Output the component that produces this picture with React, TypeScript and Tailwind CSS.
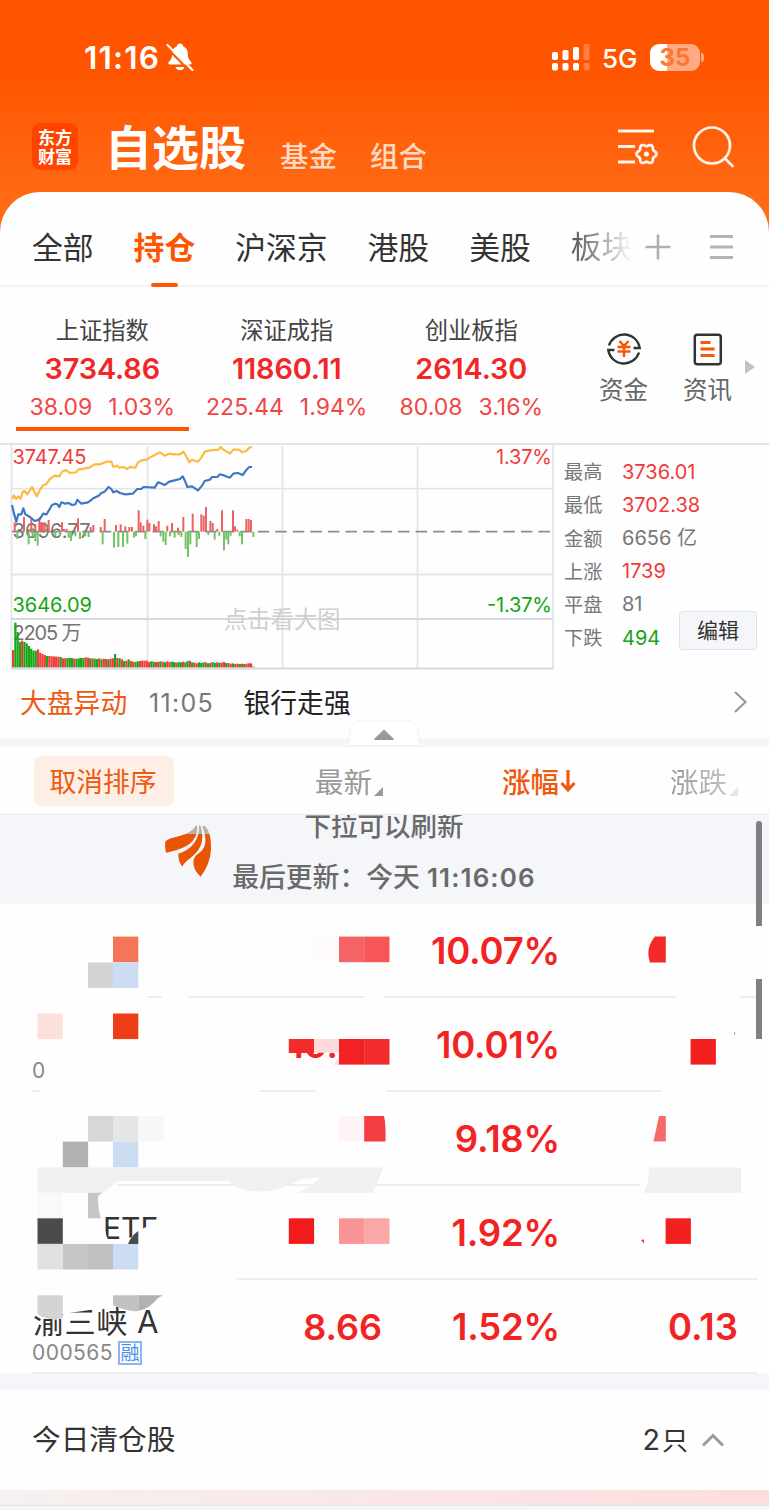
import type { ReactNode } from "react";

const tabs = ["全部", "持仓", "沪深京", "港股", "美股"];

const indices = [
  { name: "上证指数", value: "3734.86", diff: "38.09", pct: "1.03%" },
  { name: "深证成指", value: "11860.11", diff: "225.44", pct: "1.94%" },
  { name: "创业板指", value: "2614.30", diff: "80.08", pct: "3.16%" },
];

const stats = [
  { label: "最高", value: "3736.01", color: "text-[#f03a3a]" },
  { label: "最低", value: "3702.38", color: "text-[#f03a3a]" },
  { label: "金额", value: "6656 亿", color: "text-[#777777]" },
  { label: "上涨", value: "1739", color: "text-[#f03a3a]" },
  { label: "平盘", value: "81", color: "text-[#777777]" },
  { label: "下跌", value: "494", color: "text-[#14a514]" },
];

const stocks = [
  { name: "", code: "", price: "", pct: "10.07%", change: "" },
  { name: "", code: "0", price: "10.", pct: "10.01%", change: "" },
  { name: "", code: "", price: "", pct: "9.18%", change: "" },
  { name: "ETF", code: "", price: "", pct: "1.92%", change: "" },
  { name: "渝三峡 A", code: "000565", price: "8.66", pct: "1.52%", change: "0.13" },
];

// Chart series, in a space three times the size of the chart
const yellowLine =
  "36,192 42,182 48,192 54,184 62,192 68,170 74,168 82,178 96,156 110,184 120,164 130,150 138,148 150,132 164,122 178,124 186,110 198,105 210,114 228,112 234,104 268,98 284,88 300,88 320,80 334,80 340,96 352,92 358,98 372,96 380,102 390,96 406,98 414,82 424,76 440,74 460,62 480,52 494,62 508,56 520,58 540,58 550,50 560,66 568,82 576,74 594,80 604,68 614,50 630,46 656,44 662,36 670,44 690,56 700,44 718,44 726,52 738,48 748,38 756,36";
const blueLine =
  "36,210 42,236 49,260 55,238 64,238 70,220 76,238 90,246 104,258 118,254 130,236 140,238 156,210 166,206 172,208 178,216 184,202 196,206 206,204 216,210 226,208 232,194 244,206 264,202 280,190 296,182 304,174 314,170 326,156 334,162 340,172 350,168 360,174 376,178 398,176 412,162 424,162 430,156 464,158 474,142 486,146 494,150 508,140 524,136 540,132 548,124 556,140 562,156 576,154 594,166 606,152 614,138 630,134 636,126 652,126 660,118 674,122 690,128 700,116 714,114 728,120 738,106 748,96 756,96";

const upBars = [
  [44, 262], [72, 246], [94, 252], [106, 268], [118, 248], [123, 262], [128, 262], [134, 262], [146, 255],
  [186, 262], [192, 282], [200, 282], [234, 250], [272, 276], [280, 270], [302, 276], [314, 252],
  [348, 270], [362, 268], [376, 274], [388, 276], [396, 276], [416, 226], [422, 262], [430, 272],
  [442, 254], [448, 264], [462, 268], [468, 274], [476, 258], [502, 272], [516, 264], [534, 278],
  [550, 246], [578, 236], [604, 238], [611, 242], [618, 216], [631, 258], [638, 264], [652, 282],
  [666, 226], [699, 226], [705, 274], [712, 284], [739, 252], [746, 252], [753, 255],
];
const downBars = [
  [52, 312], [86, 328], [98, 304], [106, 318], [113, 332], [166, 304], [180, 304], [206, 308],
  [213, 318], [226, 304], [240, 312], [256, 304], [266, 306], [308, 328], [342, 338], [355, 336],
  [369, 336], [382, 326], [402, 308], [408, 304], [436, 312], [482, 304], [490, 320], [497, 330],
  [510, 304], [524, 308], [536, 300], [544, 306], [557, 342], [564, 366], [571, 328], [590, 336],
  [597, 312], [625, 300], [644, 314], [658, 302], [672, 346], [679, 314], [685, 328], [692, 302],
  [719, 304], [726, 328], [760, 306],
];
const volumes = [
  52, 134, 106, 76, 80, 76, 72, 64, 56, 50, 50, 54, 44, 40, 37, 34, 34, 33, 33, 32, 32, 31, 27, 27, 28,
  28, 28, 26, 26, 27, 28, 28, 30, 29, 27, 27, 26, 25, 27, 24, 26, 25, 24, 26, 27, 40, 28, 27, 24, 19,
  20, 24, 19, 17, 16, 18, 19, 20, 20, 20, 16, 18, 17, 16, 16, 18, 17, 15, 18, 16, 17, 16, 14, 16, 15,
  17, 15, 19, 20, 15, 14, 12, 15, 13, 15, 15, 12, 13, 16, 13, 15, 14, 14, 16, 13, 13, 11, 12, 10, 11,
  10, 11, 10, 11, 12, 12, 2,
];
const volumeColors =
  "rgggrggggggrrrrgrrrrrgrrgggrggggrrgrggrgrrgrrgrgrgrgrrggrrrrrggrrgrgrrggrggrggrgrrgggrgrggrgrrgrrgrrgrgrrrg";

const gearPoints = Array.from({ length: 73 }, (_, i) => {
  const a = (i * 5 * Math.PI) / 180;
  const r = 8.9 + 1.1 * Math.cos(6 * a);
  return `${(29.5 + r * Math.cos(a)).toFixed(2)},${(25 + r * Math.sin(a)).toFixed(2)}`;
}).join(" ");

function StatusBar() {
  return (
    <div className="flex h-[114px] items-center justify-between pr-[65px] pl-[84px] text-white">
      <div className="flex items-center gap-[6px]">
        <span className="pt-[1px] text-[31.5px] leading-none font-semibold tracking-[1.2px]">11:16</span>
        <svg width="28" height="28" viewBox="0 0 28 28">
          <path
            d="M14 0.5c1.7 0 2.9 1.1 3.1 2.7 3 1.2 4.7 3.9 4.7 7.5 0 4.2 1.2 6 3.4 8.2.9 1 .5 2.6-1.1 2.6H3.9c-1.6 0-2-1.6-1.1-2.6 2.2-2.2 3.4-4 3.4-8.2 0-3.6 1.7-6.3 4.7-7.5C11.1 1.6 12.3.5 14 .5z"
            fill="white"
          />
          <path d="M9.5 24h9c-.6 2-2.4 3.300-4.500 3.300S10.100 26 9.500 24z" fill="white" />
          <path d="M0.500 4.500L23.500 28" stroke="#ff5900" strokeWidth="2.200" />
          <path d="M1.500 2L26.500 27" stroke="white" strokeWidth="2.200" strokeLinecap="round" />
        </svg>
      </div>
      <div className="flex items-center">
        <svg width="38" height="28" viewBox="0 0 38 28" fill="white">
          <rect x="0" y="9" width="6" height="8" rx="1.800" />
          <rect x="10.500" y="7" width="6" height="10" rx="1.800" />
          <rect x="21" y="4" width="6" height="13" rx="1.800" />
          <rect x="31.500" y="1" width="6" height="16" rx="1.800" opacity="0.25" />
          <rect x="0" y="20" width="6" height="7.500" rx="1.800" />
          <rect x="10.500" y="20" width="6" height="7.500" rx="1.800" />
          <rect x="21" y="20" width="6" height="7.500" rx="1.800" />
          <rect x="31.500" y="20" width="6" height="7.500" rx="1.800" opacity="0.25" />
        </svg>
        <span className="ml-[12px] w-[37px] pt-[3px] text-[26px] leading-none font-medium">5G</span>
        <div className="ml-[11px] flex h-[27px] w-[50px] items-center justify-center rounded-[9px] bg-linear-to-r from-white from-35% to-[#ffaa80] to-35% pt-[2px] text-[24px] leading-none font-bold text-[#ff7630]">
          35
        </div>
        <div className="ml-[1px] h-[9px] w-[3px] rounded-r-full bg-[#ffaa80]" />
      </div>
    </div>
  );
}

function TitleBar() {
  return (
    <div className="flex h-[78px] items-start pl-[32px] text-white">
      <div className="mt-[9px] flex h-[47px] w-[46px] flex-col items-center rounded-[9px] bg-[#ff4400] pt-[4px] font-['Noto_Sans_CJK_SC',sans-serif] text-[17px] leading-[19px] font-bold">
        <span>东方</span>
        <span>财富</span>
      </div>
      <h1 className="mt-[9px] ml-[27px] w-[143px] text-[47px] leading-[50px] font-bold whitespace-nowrap">自选股</h1>
      <span className="mt-[26px] ml-[32px] text-[28.500px] leading-[34px] font-medium text-[#ffd9c4]">基金</span>
      <span className="mt-[26px] ml-[33px] text-[28.500px] leading-[34px] font-medium text-[#ffd9c4]">组合</span>
      <svg className="mt-[15px] ml-[190px]" width="44" height="38" viewBox="0 0 44 38" fill="none" stroke="#fff3ea">
        <path d="M1 2h36M1 17.500h17M1 33h17" strokeWidth="2.800" />
        <polygon points={gearPoints} strokeWidth="2.800" strokeLinejoin="round" />
        <circle cx="29.500" cy="25" r="2.600" fill="#fff3ea" stroke="none" />
      </svg>
      <svg className="mt-[12px] ml-[31px]" width="44" height="44" viewBox="0 0 44 44" fill="none" stroke="#fff3ea" strokeWidth="2.700">
        <circle cx="20" cy="19.500" r="18" />
        <path d="M33 32.500l7.500 7.500" strokeLinecap="round" />
      </svg>
    </div>
  );
}

function TabBar() {
  return (
    <nav className="flex h-[95px] items-stretch border-b-2 border-[#f3f3f4] pl-[32px] text-[30.800px] text-[#333333]">
      <div className="flex gap-[40px]">
        {tabs.map((tab) => (
          <div key={tab} className="relative flex items-center pt-[18px] leading-[40px] whitespace-nowrap">
            {tab === "持仓" ? (
              <>
                <span className="font-bold text-[#ff5500]">{tab}</span>
                <i className="absolute -bottom-[2px] left-[17px] h-[4px] w-[27px] rounded-sm bg-[#ff5500]" />
              </>
            ) : (
              tab
            )}
          </div>
        ))}
        <div className="w-[62px] bg-linear-to-r from-[#555555] to-white bg-clip-text pt-[35px] leading-[40px] whitespace-nowrap text-transparent">
          板块
        </div>
      </div>
      <svg className="mt-[42px] ml-[12px]" width="26" height="26" viewBox="0 0 26 26" stroke="#b0b0b0" strokeWidth="2.600">
        <path d="M0.500 13h25M13 .500v25" />
      </svg>
      <svg className="mt-[42px] ml-[38px]" width="26" height="26" viewBox="0 0 26 26" stroke="#b4b4b4" strokeWidth="3">
        <path d="M1 2.500h23M1 13h23M1 23.500h23" />
      </svg>
    </nav>
  );
}

function Shortcut({ label, children }: { label: string; children: ReactNode }) {
  return (
    <div className="flex w-[50px] flex-col items-center">
      {children}
      <span className="mt-[5px] text-[24.500px] leading-[34px] whitespace-nowrap text-[#666666]">{label}</span>
    </div>
  );
}

function IndexStrip() {
  return (
    <section className="flex h-[156px] pl-[10px]">
      {indices.map((item, i) => (
        <div key={item.name} className="flex w-[184.500px] flex-col items-center pt-[28px] whitespace-nowrap">
          <span className="text-[23.300px] leading-[32px] text-[#444444]">{item.name}</span>
          <span className="text-[28.800px] leading-[44px] font-semibold tracking-[-0.100px] text-[#f22626]">{item.value}</span>
          <div className="flex gap-[16px] text-[23px] leading-[32px] text-[#f24545]">
            <span>{item.diff}</span>
            <span>{item.pct}</span>
          </div>
          {i === 0 && <i className="mt-[4px] h-[4px] w-[173px] bg-[#ff5500]" />}
        </div>
      ))}
      <div className="flex gap-[34px] pt-[43px] pl-[35px]">
        <Shortcut label="资金">
          <svg width="38" height="38" viewBox="0 0 38 38" fill="none" stroke="#333333" strokeWidth="2.400">
            <path d="M4 15.500A15.800 15.800 0 0 1 34.700 18H28.500M34 22.500A15.800 15.800 0 0 1 3.300 20H9.500" />
            <path
              d="M14.500 11l4.500 5 4.500-5M12.500 17h13M12.500 21.500h13M19 16v11"
              stroke="#f5590a"
              strokeWidth="2.600"
            />
          </svg>
        </Shortcut>
        <Shortcut label="资讯">
          <svg width="38" height="38" viewBox="0 0 38 38" fill="none" stroke="#333333" strokeWidth="2.500">
            <rect x="5.800" y="4.800" width="26" height="29.500" rx="2.500" />
            <path d="M11.500 12.500h10M11.500 19h14M11.500 25.500h14" stroke="#f5590a" strokeWidth="2.800" />
          </svg>
        </Shortcut>
      </div>
      <svg className="mt-[72px] ml-[12px]" width="10" height="16" viewBox="0 0 10 16">
        <path d="M0 1l10 7-10 7z" fill="#c2c2c2" />
      </svg>
    </section>
  );
}

function Chart() {
  return (
    <svg className="block shrink-0" width="555" height="225" viewBox="0 445 555 225" fontSize="20">
      <g stroke="#e3e5ee" strokeWidth="1.800" fill="none">
        <path d="M11.500 444V669M553 444V669M147.500 446V669M282.500 446V669M417.500 446V669" />
        <path d="M11 488.700H553M11 574.500H553" />
        <path d="M11 619H553M11 668.500H553" stroke="#d5d8de" />
      </g>
      <path d="M12 531.700H552" stroke="#8c8c8c" strokeWidth="1.800" strokeDasharray="11.500 6.050" />
      <g fill="#747474">
        <text x="12.500" y="538" textLength="78">3696.77</text>
        <text x="12.500" y="640" textLength="69">2205 万</text>
      </g>
      <text x="224" y="628" fontSize="23.300" textLength="116.500" fill="#cfcfcf">点击看大图</text>
      <g transform="translate(0 435) scale(0.33333)">
        {upBars.map(([x, y]) => (
          <rect key={x} x={x - 3} y={y} width="6" height={290 - y} fill="#ea6262" />
        ))}
        {downBars.map(([x, y]) => (
          <rect key={x} x={x - 3} y="290" width="6" height={y - 290} fill="#74c365" />
        ))}
        {volumes.map((h, i) => (
          <rect
            key={i}
            x={36 + i * 6.8}
            y={697 - h}
            width="6.600"
            height={h}
            fill={volumeColors[i] === "r" ? "#f23c3c" : "#17a817"}
          />
        ))}
        <polyline points={yellowLine} fill="none" stroke="#fcba3e" strokeWidth="6.500" strokeLinejoin="round" />
        <polyline points={blueLine} fill="none" stroke="#3c78c3" strokeWidth="6.500" strokeLinejoin="round" />
      </g>
      <g fill="#f03a3a">
        <text x="12.500" y="464" textLength="74">3747.45</text>
        <text x="496" y="464" textLength="56">1.37%</text>
      </g>
      <g fill="#14a514">
        <text x="12.500" y="612" textLength="79.500">3646.09</text>
        <text x="487" y="612" textLength="65">-1.37%</text>
      </g>
    </svg>
  );
}

function ChartPanel() {
  return (
    <section className="flex h-[227px] border-t-2 border-[#e3e5ea]">
      <Chart />
      <div className="flex flex-1 pl-[9px]">
        <div className="flex flex-col pt-[11px]">
          {stats.map((s) => (
            <div key={s.label} className="flex h-[33.200px] items-center text-[20px] whitespace-nowrap">
              <span className="w-[58px] text-[19.200px] text-[#777777]">{s.label}</span>
              <span className={`w-[58px] pb-[2px] ${s.color}`}>{s.value}</span>
            </div>
          ))}
        </div>
        <button className="mt-[165.500px] -ml-[1px] h-[39px] w-[78px] shrink-0 rounded-[4px] border border-[#dde1e8] bg-[#f5f6f9] text-[21px] leading-none whitespace-nowrap text-[#333333]">
          编辑
        </button>
      </div>
    </section>
  );
}

function NewsRow() {
  return (
    <section className="relative flex h-[77px] items-start border-b-[9px] border-[#f5f6f9] pt-[15px] pl-[20px] leading-[36px] whitespace-nowrap">
      <span className="w-[129px] text-[26.800px] text-[#ee5a10]">大盘异动</span>
      <span className="w-[94.500px] text-[25px] tracking-[1.300px] text-[#777777]">11:05</span>
      <span className="text-[26.800px] text-[#222222]">银行走强</span>
      <svg className="mt-[5px] ml-[382px]" width="15" height="24" viewBox="0 0 15 24" fill="none" stroke="#999999" strokeWidth="2.200">
        <path d="M2 2l10.500 10L2 22" />
      </svg>
      {/* Collapse handle */}
      <svg className="absolute top-[50px] left-[346px]" width="76" height="26" viewBox="0 0 76 26">
        <path d="M1.500 25.500C3 22 3 20 3.500 14 4.300 5 9 1 16 1H60c7 0 11.700 4 12.500 13 .500 6 .500 8 2 11.500z" fill="white" stroke="#f0f1f3" />
        <path d="M38 9.500l10 9.500c0 .800-.500 1-1 1H29c-.500 0-1-.200-1-1z" fill="#999999" />
      </svg>
    </section>
  );
}

function ColumnHeader() {
  return (
    <div className="flex h-[68px] items-center border-b border-[#e9eaec] pt-[1px] pl-[34px] text-[28.500px] whitespace-nowrap text-[#999999]">
      <button className="h-[50px] w-[140px] rounded-[8px] bg-[#fdeee6] pt-[3px] pr-[2px] text-[26.800px] leading-none text-[#ee5a10]">
        取消排序
      </button>
      <span className="ml-[141px] pt-[4px]">最新</span>
      <svg className="mt-[20px] ml-[2px]" width="9" height="9" viewBox="0 0 9 9">
        <path d="M9 0v9H0z" fill="#999999" />
      </svg>
      <span className="ml-[119px] pt-[4px] font-medium text-[#ee5a10]">涨幅</span>
      <svg className="ml-[1px]" width="16" height="24" viewBox="0 0 16 24" fill="none" stroke="#ee5a10" strokeWidth="3.200">
        <path d="M8 1v20M1.500 14L8 21l6.500-7" />
      </svg>
      <span className="ml-[94px] bg-linear-to-r from-[#999999] to-[#c4c4c4] bg-clip-text pt-[4px] text-transparent">涨跌</span>
      <svg className="mt-[20px] ml-[2px]" width="9" height="9" viewBox="0 0 9 9">
        <path d="M9 0v9H0z" fill="#e6e6e6" />
      </svg>
    </div>
  );
}

function RefreshBanner() {
  return (
    <div className="flex h-[89px] overflow-hidden bg-[#f5f6f9] pl-[164px] font-medium whitespace-nowrap text-[#6a6a6a]">
      <svg className="mt-[9px]" width="50" height="54" viewBox="0 0 50 54">
        <defs>
          <linearGradient id="ribbon" gradientUnits="userSpaceOnUse" x1="0" y1="0" x2="0" y2="20">
            <stop offset="0.5" stopColor="#b8b1ad" />
            <stop offset="0.5" stopColor="#ea5504" />
          </linearGradient>
        </defs>
        <g fill="url(#ribbon)">
          <path d="M1.300 17.500C8 11.500 25 13.500 32 1.300L33.300 2.700C34 21 16 25.500 2 28.700Q0.500 23 1.300 17.500z" />
          <path d="M35 1.500C35.500 15 29 25 14.300 29.800Q14 37 18.300 42.700C21 36 35 31 37.800 18 39 11 37.800 6 36.500 1.500z" />
          <path d="M38.300 2C45 20 40 26 32.500 31 27 36 29 46 36.700 52.700 42 45 47 36 47 24 47 14 46 8 41 2z" />
        </g>
      </svg>
      <div className="flex w-[340px] flex-col items-center">
        <span className="-mt-[8px] text-[26.500px] leading-[38px]">下拉可以刷新</span>
        <span className="mt-[13px] text-[26.800px] leading-[38px]">
          最后更新：今天 <span className="text-[26px] font-semibold tracking-[1.100px]">11:16:06</span>
        </span>
      </div>
    </div>
  );
}

const tiles: [number, number, string][] = [
  [113, 936.6, "#f47558"],
  [88, 962.5, "#d4d4d4"],
  [113, 962.5, "#ccddf3"],
  [314, 936.6, "#fffafb"],
  [339, 936.6, "#f66366"],
  [364.2, 936.6, "#f75558"],
  [37.5, 1013.5, "#fce0da"],
  [113, 1013.5, "#ee3e18"],
  [339, 1039, "#f22224"],
  [364.2, 1039, "#f22b2c"],
  [690.6, 1039, "#f32020"],
  [37.5, 1116, "#fdfdfd"],
  [88, 1116, "#d7d7d7"],
  [113, 1116, "#e6e6e6"],
  [138.2, 1116, "#f7f7f7"],
  [62.8, 1141.6, "#b1b1b1"],
  [113, 1141.6, "#ccddf3"],
  [339, 1116, "#fff4f5"],
  [37.5, 1192.7, "#f9f9f9"],
  [37.5, 1218.3, "#4b4b4b"],
  [37.5, 1243.9, "#e1e1e1"],
  [62.8, 1243.9, "#c6c6c6"],
  [88, 1243.9, "#c1c1c1"],
  [113, 1243.9, "#ccddf3"],
  [288.8, 1218.3, "#f21b1b"],
  [339, 1218.3, "#fa9494"],
  [364.2, 1218.3, "#faa7a7"],
  [665.6, 1218.3, "#f32020"],
];

// Blocks and brush strokes that hide the private holdings
function PrivacyMask() {
  return (
    <svg className="pointer-events-none absolute inset-0" width="769" height="470" viewBox="0 904 769 470">
      <g fill="#fefefe">
        <rect x="0" y="990" width="147" height="14" />
        <rect x="162" y="990" width="27" height="14" />
        <rect x="365" y="990" width="19" height="14" />
        <rect x="676" y="990" width="64" height="14" />
        <rect x="41" y="1085" width="218" height="12" />
        <rect x="315" y="1085" width="71" height="12" />
        <rect x="662" y="1085" width="107" height="12" />
        <rect x="0" y="1178" width="117" height="14" />
        <rect x="640" y="1178" width="129" height="14" />
        <rect x="0" y="1272" width="236" height="14" />
      </g>
      <path
        d="M37.500 1167.500H383.500L373 1192.700H298Q312 1187 320 1177.500L301 1179Q282 1191 262 1191.500C240 1191.500 236 1187 228 1181H117Q109 1190 98 1194V1192.700H37.500z"
        fill="#f0f0f0"
      />
      <path d="M88 1192.700H103Q97 1195 98 1199 98 1210 101 1218.300H88z" fill="#c6c6c6" />
      <path d="M649 1167.500H741V1192.700H643Q649 1186 649 1167.500z" fill="#f0f0f0" />
      {tiles.map(([x, y, fill]) => (
        <rect key={`${x}-${y}`} x={x} y={y} width="25.300" height="25.600" fill={fill} />
      ))}
      {/* Second row price */}
      <rect x="286" y="1028" width="53" height="24.500" fill="#fefefe" />
      <path d="M288.800 1039h25.200v14h-25.200z" fill="#f22b2c" />
      <path d="M314 1039h25v13.500h-25z" fill="#fddadd" />
      <path d="M339 1057v8h-5z" fill="#fddadd" />
      {/* Change column */}
      <path d="M655 936.600H665.800V962.500H650Q645 948 655 936.600z" fill="#f32a2a" />
      <path d="M659 1116H665.800V1141.600H653.500z" fill="#f76a6a" />
      <path d="M641 1240l3-.500v4z" fill="#f32a2a" />
      <rect x="734" y="1032" width="1.200" height="3" fill="#f79a9a" />
      <path d="M364.200 1116H384Q386 1124 385.500 1141.600H364.200z" fill="#f43d40" />
      {/* Name of the fourth row */}
      <path d="M101 1218C106 1228 105 1240 112 1243H101z" fill="#fefefe" />
      <path d="M122 1239Q131 1240 138 1231L146 1227H162V1244H122z" fill="#fefefe" />
      <path d="M138.300 1231V1243.900H128Q131 1236 138.300 1231z" fill="#4b4b4b" />
      {/* Name of the last row */}
      <path d="M30 1298H112V1309H97L62 1314V1319L34 1313z" fill="#fefefe" />
      <path d="M37.500 1295.200H62.800V1318Q50 1322 37.500 1314z" fill="#d4d4d4" />
      <path d="M113 1295.200H138.300V1311Q127 1312 113 1305z" fill="#c1c1c1" />
      <path d="M138.300 1295.200H163L158 1298Q149 1309 138.300 1311z" fill="#b1b1b1" />
    </svg>
  );
}

function StockList() {
  return (
    <section className="relative h-[470px]">
      {stocks.map((s) => (
        <div
          key={s.pct}
          className="ml-[32px] flex h-[94px] w-[726px] items-center border-b-2 border-[#efeff0] font-semibold whitespace-nowrap text-[#f22323]"
        >
          <div className="flex h-full w-[200px] flex-col justify-end pb-[6px] font-normal">
            {s.name === "ETF" ? (
              <span className="pl-[71px] text-[30px] leading-[36px] text-[#333333]">{s.name}</span>
            ) : (
              <span className="pl-[1px] text-[31.200px] leading-[36px] tracking-[0.400px] text-[#333333]">{s.name}</span>
            )}
            <div className="flex h-[26px] items-center gap-[5px] text-[21px] text-[#888888]">
              <span className="tracking-[0.450px]">{s.code}</span>
              {s.price === "8.66" && (
                <span className="flex size-[24px] items-center justify-center border-2 border-[#8bb6ec] text-[19px] leading-none text-[#4a90e2]">
                  融
                </span>
              )}
            </div>
          </div>
          {s.price === "10." ? (
            <span className="w-[150px] pt-[2px] pr-[44px] text-right text-[36px]">{s.price}</span>
          ) : (
            <span className="w-[150px] pt-[2px] text-right text-[36px]">{s.price}</span>
          )}
          <span className="w-[178px] pt-[2px] text-right text-[36.500px] tracking-[-0.200px]">{s.pct}</span>
          <span className="w-[178px] pt-[2px] text-right text-[36.500px]">{s.change}</span>
        </div>
      ))}
      <PrivacyMask />
    </section>
  );
}

function ClosedPositions() {
  return (
    <section className="flex h-[116px] items-center border-t-[16px] border-[#f5f6f9] pr-[45px] pb-[1px] pl-[32px] text-[28.700px] text-[#333333]">
      <span className="flex-1">今日清仓股</span>
      <span>
        2<span className="ml-[2px] text-[26px]">只</span>
      </span>
      <svg className="ml-[14px]" width="22" height="14" viewBox="0 0 22 14" fill="none" stroke="#999999" strokeWidth="3">
        <path d="M1 12.500L11 2.500l10 10" />
      </svg>
    </section>
  );
}

export default function App() {
  return (
    <div className="relative h-[1510px] w-[769px] overflow-hidden bg-[#fefefe] font-['Inter','Noto_Sans_CJK_SC',sans-serif]">
      <header className="h-[240px] bg-linear-to-b from-[#ff5500] from-30% to-[#ff7019]">
        <StatusBar />
        <TitleBar />
      </header>
      <main className="-mt-[48px] rounded-t-[40px] bg-[#fefefe]">
        <TabBar />
        <IndexStrip />
        <ChartPanel />
        <NewsRow />
        <ColumnHeader />
        <RefreshBanner />
        <StockList />
        <ClosedPositions />
        <div className="h-[15px] bg-linear-to-r from-[#f7f0f0] to-[#fddddd]" />
        <div className="h-[6px] border-t border-[#e6e6ea] bg-[#f5f6f9]" />
      </main>
      {/* Scroll thumb */}
      <i className="absolute top-[821px] left-[756px] h-[105px] w-[6px] rounded-t-full bg-[#808080]" />
      <i className="absolute top-[979px] left-[756px] h-[60px] w-[6px] bg-[#808080]" />
    </div>
  );
}
